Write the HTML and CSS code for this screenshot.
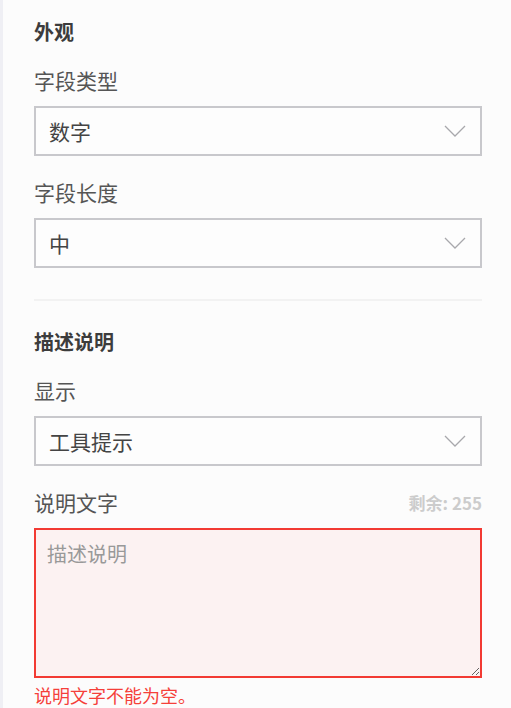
FILE: index.html
```html
<!DOCTYPE html>
<html lang="zh">
<head>
<meta charset="utf-8">
<link rel="stylesheet" href="styles.css">
</head>
<body>
<div class="panel">
  <section class="group">
    <h2 class="heading">外观</h2>
    <div class="field">
      <div class="label-row"><span class="label">字段类型</span></div>
      <div class="select"><span class="select-value">数字</span>
        <svg class="chevron" width="22" height="12" viewBox="0 0 22 12"><path d="M1 1 L11 11 L21 1" fill="none" stroke="#a8a8ac" stroke-width="1.3"/></svg>
      </div>
    </div>
    <div class="field">
      <div class="label-row"><span class="label">字段长度</span></div>
      <div class="select"><span class="select-value">中</span>
        <svg class="chevron" width="22" height="12" viewBox="0 0 22 12"><path d="M1 1 L11 11 L21 1" fill="none" stroke="#a8a8ac" stroke-width="1.3"/></svg>
      </div>
    </div>
  </section>
  <hr class="divider">
  <section class="group">
    <h2 class="heading">描述说明</h2>
    <div class="field">
      <div class="label-row"><span class="label">显示</span></div>
      <div class="select"><span class="select-value">工具提示</span>
        <svg class="chevron" width="22" height="12" viewBox="0 0 22 12"><path d="M1 1 L11 11 L21 1" fill="none" stroke="#a8a8ac" stroke-width="1.3"/></svg>
      </div>
    </div>
    <div class="field">
      <div class="label-row"><span class="label">说明文字</span><span class="counter">剩余: 255</span></div>
      <textarea class="textarea error" placeholder="描述说明"></textarea>
      <div class="error-text">说明文字不能为空。</div>
    </div>
  </section>
</div>
</body>
</html>
```

FILE: styles.css
```css
html, body {
  margin: 0;
  padding: 0;
  background: #fcfcfc;
}
body {
  font-family: "Noto Sans CJK SC", "Noto Sans", sans-serif;
  color: #555;
}
.panel {
  border-left: 3px solid #efeff4;
  padding: 18px 29px 0 31px;
  min-height: 708px;
  box-sizing: border-box;
}
.heading {
  margin: 0 0 20px 0;
  font-size: 20px;
  line-height: 28px;
  font-weight: bold;
  color: #3c3c3c;
}
.field {
  margin-bottom: 22px;
}
.field:last-child {
  margin-bottom: 0;
}
.label-row {
  display: flex;
  justify-content: space-between;
  align-items: center;
  height: 28px;
  margin-bottom: 12px;
}
.label {
  font-size: 21px;
  line-height: 28px;
  color: #555;
}
.counter {
  font-size: 17px;
  font-weight: bold;
  color: #cccccc;
}
.select {
  height: 50px;
  box-sizing: border-box;
  border: 2px solid #c8c8cc;
  background: #fdfdfd;
  display: flex;
  align-items: center;
  justify-content: space-between;
  padding: 0 14px 0 13px;
}
.select-value {
  font-size: 21px;
  color: #444;
}
.chevron {
  display: block;
}
.divider {
  border: 0;
  border-top: 2px solid #f2f2f2;
  margin: 31px 0 27px 0;
}
.textarea {
  display: block;
  width: 100%;
  height: 150px;
  box-sizing: border-box;
  border: 2px solid #c8c8cc;
  padding: 10px 11px;
  font-family: "Noto Sans CJK SC", "Noto Sans", sans-serif;
  font-size: 20px;
  line-height: 28px;
  color: #444;
  outline: none;
  margin: 0;
}
.textarea::placeholder {
  color: #999;
}
.textarea.error {
  border-color: #f23a33;
  background: #fcf2f2;
}
.error-text {
  margin-top: 5px;
  font-size: 18px;
  line-height: 24px;
  color: #f5403a;
}
```
